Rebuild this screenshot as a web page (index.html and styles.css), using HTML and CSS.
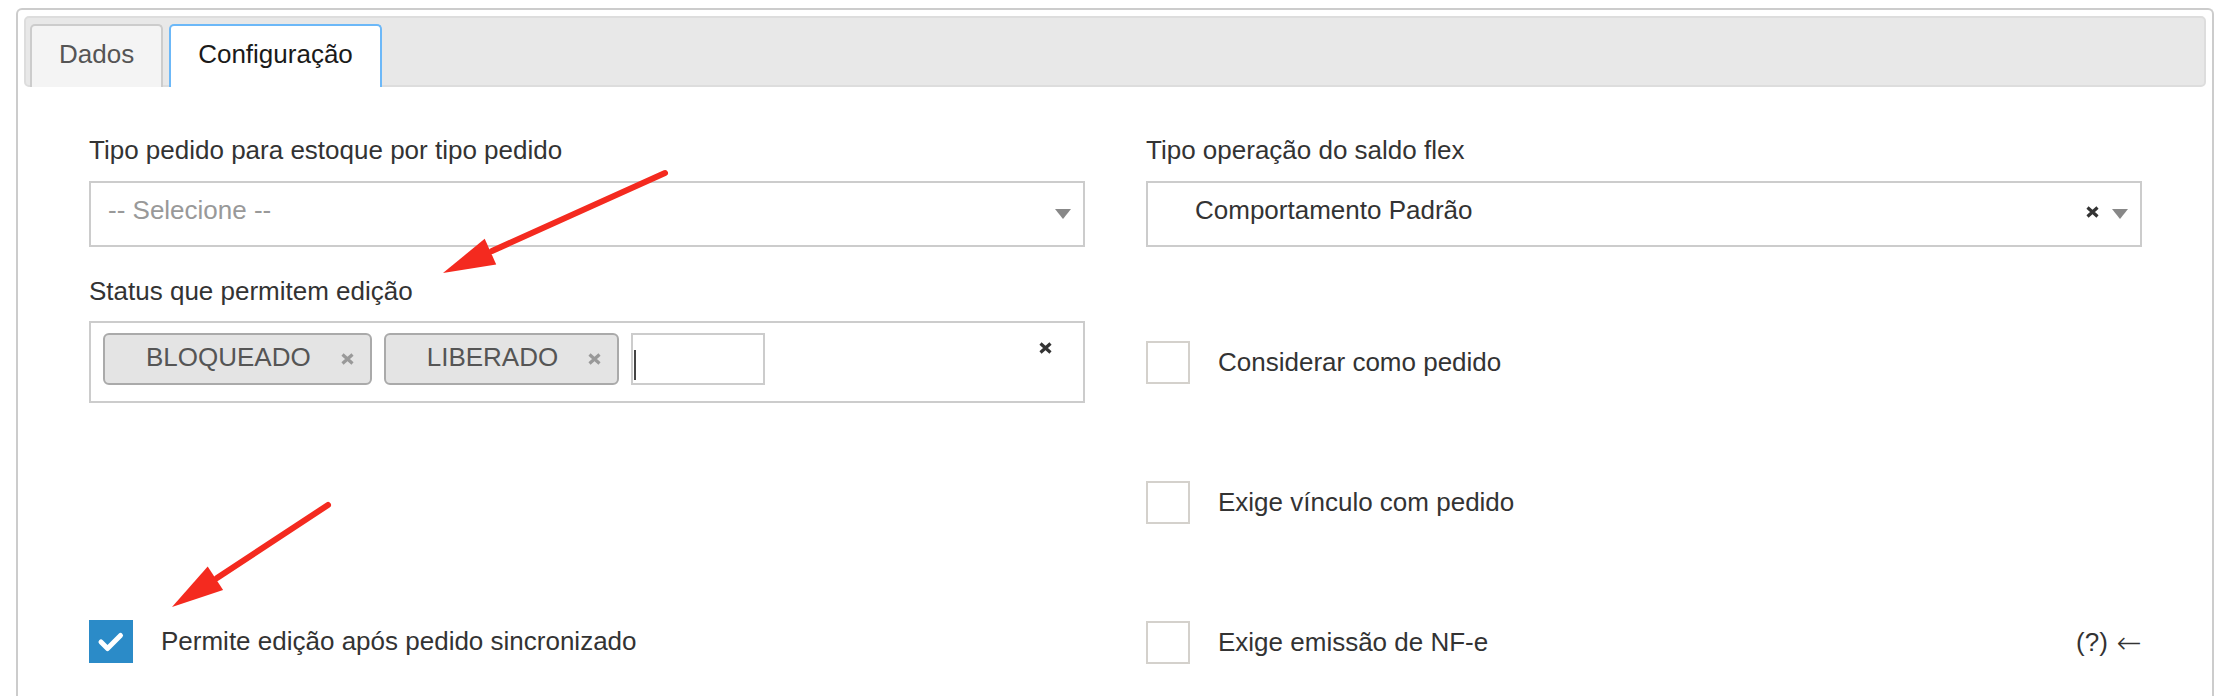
FILE: index.html
```html
<!DOCTYPE html>
<html lang="pt-BR">
<head>
<meta charset="utf-8">
<title>Configuração</title>
<link rel="stylesheet" href="styles.css">
</head>
<body>
<div class="panel">
  <div class="tabbar">
    <div class="tab">Dados</div>
    <div class="tab active">Configuração</div>
  </div>
  <div class="content">
    <div class="col">
      <div class="label">Tipo pedido para estoque por tipo pedido</div>
      <div class="select">
        <span class="placeholder">-- Selecione --</span>
        <span class="icons">
          <svg class="caret" width="16" height="10" viewBox="0 0 16 10"><path d="M0 0H16L8 10Z" fill="#888"/></svg>
        </span>
      </div>
      <div class="label label-gap">Status que permitem edição</div>
      <div class="multi">
        <span class="tag">BLOQUEADO<svg class="tag-x" width="13" height="12" viewBox="0 0 13 12"><path d="M1.5 1.5L11.5 10.5M11.5 1.5L1.5 10.5" stroke="#999" stroke-width="3.2"/></svg></span>
        <span class="tag">LIBERADO<svg class="tag-x" width="13" height="12" viewBox="0 0 13 12"><path d="M1.5 1.5L11.5 10.5M11.5 1.5L1.5 10.5" stroke="#999" stroke-width="3.2"/></svg></span>
        <span class="search"><span class="cursor"></span></span>
        <svg class="clear" width="13" height="12" viewBox="0 0 13 12"><path d="M1.5 1.5L11.5 10.5M11.5 1.5L1.5 10.5" stroke="#333" stroke-width="3.2"/></svg>
      </div>
      <div class="check-row row-left">
        <span class="box checked"><svg width="44" height="43" viewBox="0 0 44 43"><path d="M12 22L18.5 28.5L31.5 15.5" fill="none" stroke="#fff" stroke-width="5" stroke-linecap="round" stroke-linejoin="round"/></svg></span>
        <span>Permite edição após pedido sincronizado</span>
      </div>
    </div>
    <div class="col">
      <div class="label">Tipo operação do saldo flex</div>
      <div class="select select-wide">
        <span class="value">Comportamento Padrão</span>
        <span class="icons">
          <svg class="x" width="13" height="12" viewBox="0 0 13 12"><path d="M1.5 1.5L11.5 10.5M11.5 1.5L1.5 10.5" stroke="#333" stroke-width="3.2"/></svg>
          <svg class="caret" width="16" height="10" viewBox="0 0 16 10"><path d="M0 0H16L8 10Z" fill="#888"/></svg>
        </span>
      </div>
      <div class="check-row row-r1">
        <span class="box"></span>
        <span>Considerar como pedido</span>
      </div>
      <div class="check-row row-r2">
        <span class="box"></span>
        <span>Exige vínculo com pedido</span>
      </div>
      <div class="check-row row-r3">
        <span class="box"></span>
        <span>Exige emissão de NF-e</span>
        <span class="help">(?)<span class="arrow-left">←</span></span>
      </div>
    </div>
  </div>
</div>
<svg class="annotations" width="2226" height="696" viewBox="0 0 2226 696">
  <line x1="665" y1="173" x2="492" y2="251" stroke="#f42a1f" stroke-width="6" stroke-linecap="round"/>
  <path d="M443 273L484.7 238.8L496.2 264.4Z" fill="#f42a1f"/>
  <line x1="328" y1="505" x2="217" y2="578" stroke="#f42a1f" stroke-width="6" stroke-linecap="round"/>
  <path d="M172 607L207.7 566.6L223.1 590Z" fill="#f42a1f"/>
</svg>
</body>
</html>
```
FILE: styles.css
```css
* { box-sizing: border-box; }
html, body { background: #fff; }
body {
  margin: 8px 12px 0 16px;
  font-family: "Liberation Sans", Arial, sans-serif;
  font-size: 26px;
  color: #333;
  position: relative;
  overflow: hidden;
  height: 688px;
}
.panel {
  border: 2px solid #ccc;
  border-bottom: none;
  border-radius: 6px 6px 0 0;
  padding: 6px;
  min-height: 900px;
}
.tabbar {
  display: flex;
  gap: 6px;
  background: #e8e8e8;
  border: 2px solid #ddd;
  border-radius: 5px;
  padding: 6px 4px 0;
  height: 71px;
}
.tab {
  height: 63px;
  margin-bottom: -2px;
  padding: 0 27px 4px;
  display: flex;
  align-items: center;
  border: 2px solid #ccc;
  border-bottom: none;
  border-radius: 5px 5px 0 0;
  background: #f4f4f4;
  color: #555;
  position: relative;
}
.tab.active {
  background: #fff;
  border-color: #6cb8f8;
  color: #1a1a1a;
}
.content {
  display: grid;
  grid-template-columns: 996px 996px;
  column-gap: 61px;
  padding: 48px 64px 0 65px;
}
.col { display: flex; flex-direction: column; }
.label { height: 30px; line-height: 30px; white-space: nowrap; }
.label-gap { margin-top: 29px; }
.select {
  margin-top: 16px;
  height: 66px;
  border: 2px solid #ccc;
  display: flex;
  align-items: center;
  padding: 0 12px 8px 17px;
}
.select-wide { padding-left: 47px; }
.placeholder { color: #999; }
.value { color: #333; }
.icons {
  margin-left: auto;
  margin-top: 8px;
  display: flex;
  align-items: center;
  gap: 13px;
}
.icons .x { margin-top: -4px; }
.multi {
  margin-top: 15px;
  height: 82px;
  border: 2px solid #ccc;
  padding: 10px 12px;
  display: flex;
  align-items: flex-start;
  gap: 12px;
}
.tag {
  height: 52px;
  display: flex;
  align-items: center;
  padding: 0 16px 4px 41px;
  border: 2px solid #aaa;
  border-radius: 6px;
  background: #e4e4e4;
  color: #555;
  white-space: nowrap;
}
.tag-x { margin-left: 30px; margin-top: 3px; }
.search {
  width: 134px;
  height: 52px;
  border: 2px solid #ccc;
  display: flex;
  align-items: flex-start;
  padding: 15px 0 0 1px;
}
.cursor { width: 2px; height: 30px; background: #444; }
.clear { margin-left: auto; margin-top: 9px; margin-right: 19px; }
.check-row {
  display: flex;
  align-items: center;
  gap: 28px;
  height: 43px;
  white-space: nowrap;
}
.row-left { margin-top: 217px; }
.row-r1 { margin-top: 94px; }
.row-r2 { margin-top: 97px; }
.row-r3 { margin-top: 97px; }
.box {
  width: 44px;
  height: 43px;
  flex: none;
  border: 2px solid #d4d1cc;
  background: #fff;
}
.box.checked {
  border: none;
  background: #2b8bc8;
}
.box.checked svg { display: block; }
.help { margin-left: auto; color: #333; display: flex; align-items: center; gap: 9px; }
.arrow-left { font-family: "DejaVu Sans", sans-serif; font-size: 30px; font-weight: 300; line-height: 30px; }
.annotations {
  position: absolute;
  top: -8px;
  left: -16px;
  pointer-events: none;
}
```
